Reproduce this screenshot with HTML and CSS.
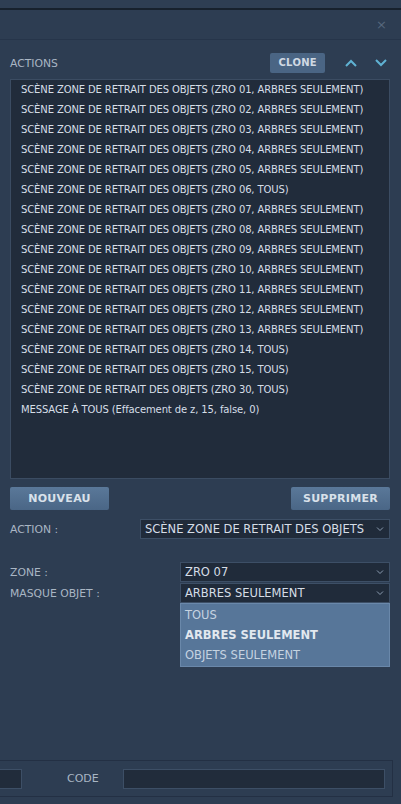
FILE: index.html
```html
<!DOCTYPE html>
<html>
<head>
<meta charset="utf-8">
<link rel="stylesheet" href="styles.css">
</head>
<body>
<div class="top-strip"></div>
<div class="header">
  <span class="close">×</span>
</div>
<div class="content">
  <div class="actions-row">
    <span class="label">ACTIONS</span>
    <div class="actions-tools">
      <span class="clone">CLONE</span>
      <svg class="arrow up" width="14" height="10" viewBox="0 0 14 10"><path d="M2 8 L7 3 L12 8" fill="none" stroke="#5fb2d3" stroke-width="2"/></svg>
      <svg class="arrow down" width="14" height="10" viewBox="0 0 14 10"><path d="M2 2 L7 7 L12 2" fill="none" stroke="#5fb2d3" stroke-width="2"/></svg>
    </div>
  </div>
  <div class="list">
    <div class="item">SCÈNE ZONE DE RETRAIT DES OBJETS (ZRO 01, ARBRES SEULEMENT)</div>
    <div class="item">SCÈNE ZONE DE RETRAIT DES OBJETS (ZRO 02, ARBRES SEULEMENT)</div>
    <div class="item">SCÈNE ZONE DE RETRAIT DES OBJETS (ZRO 03, ARBRES SEULEMENT)</div>
    <div class="item">SCÈNE ZONE DE RETRAIT DES OBJETS (ZRO 04, ARBRES SEULEMENT)</div>
    <div class="item">SCÈNE ZONE DE RETRAIT DES OBJETS (ZRO 05, ARBRES SEULEMENT)</div>
    <div class="item">SCÈNE ZONE DE RETRAIT DES OBJETS (ZRO 06, TOUS)</div>
    <div class="item">SCÈNE ZONE DE RETRAIT DES OBJETS (ZRO 07, ARBRES SEULEMENT)</div>
    <div class="item">SCÈNE ZONE DE RETRAIT DES OBJETS (ZRO 08, ARBRES SEULEMENT)</div>
    <div class="item">SCÈNE ZONE DE RETRAIT DES OBJETS (ZRO 09, ARBRES SEULEMENT)</div>
    <div class="item">SCÈNE ZONE DE RETRAIT DES OBJETS (ZRO 10, ARBRES SEULEMENT)</div>
    <div class="item">SCÈNE ZONE DE RETRAIT DES OBJETS (ZRO 11, ARBRES SEULEMENT)</div>
    <div class="item">SCÈNE ZONE DE RETRAIT DES OBJETS (ZRO 12, ARBRES SEULEMENT)</div>
    <div class="item">SCÈNE ZONE DE RETRAIT DES OBJETS (ZRO 13, ARBRES SEULEMENT)</div>
    <div class="item">SCÈNE ZONE DE RETRAIT DES OBJETS (ZRO 14, TOUS)</div>
    <div class="item">SCÈNE ZONE DE RETRAIT DES OBJETS (ZRO 15, TOUS)</div>
    <div class="item">SCÈNE ZONE DE RETRAIT DES OBJETS (ZRO 30, TOUS)</div>
    <div class="item">MESSAGE À TOUS (Effacement de z, 15, false, 0)</div>
  </div>
  <div class="buttons">
    <span class="btn">NOUVEAU</span>
    <span class="btn">SUPPRIMER</span>
  </div>
  <div class="field action-field">
    <span class="label">ACTION :</span>
    <div class="select wide">
      <span>SCÈNE ZONE DE RETRAIT DES OBJETS</span>
      <svg class="chev" width="8" height="6" viewBox="0 0 8 6"><path d="M1 1.5 L4 4.5 L7 1.5" fill="none" stroke="#8a9bb0" stroke-width="1"/></svg>
    </div>
  </div>
  <div class="params">
    <div class="field">
      <span class="label">ZONE :</span>
      <div class="select narrow">
        <span>ZRO 07</span>
        <svg class="chev" width="8" height="6" viewBox="0 0 8 6"><path d="M1 1.5 L4 4.5 L7 1.5" fill="none" stroke="#8a9bb0" stroke-width="1"/></svg>
      </div>
    </div>
    <div class="field">
      <span class="label">MASQUE OBJET :</span>
      <div class="select narrow open">
        <span>ARBRES SEULEMENT</span>
        <svg class="chev" width="8" height="6" viewBox="0 0 8 6"><path d="M1 1.5 L4 4.5 L7 1.5" fill="none" stroke="#8a9bb0" stroke-width="1"/></svg>
        <div class="dropdown">
          <div class="opt">TOUS</div>
          <div class="opt sel">ARBRES SEULEMENT</div>
          <div class="opt">OBJETS SEULEMENT</div>
        </div>
      </div>
    </div>
  </div>
</div>
<div class="footer">
  <div class="input left-input"></div>
  <span class="code-label">CODE</span>
  <div class="input code-input"></div>
</div>
</body>
</html>
```
FILE: styles.css
```css
html, body {
  margin: 0;
  padding: 0;
}
body {
  width: 401px;
  height: 804px;
  overflow: hidden;
  background: #2d3d52;
  font-family: "DejaVu Sans", sans-serif;
  color: #c5d0dc;
  display: flex;
  flex-direction: column;
}
.top-strip {
  height: 8px;
  background: #2e3e53;
  border-bottom: 2px solid #17212d;
}
.header {
  height: 29px;
  border-bottom: 1px solid #26354a;
  display: flex;
  justify-content: flex-end;
  align-items: center;
  padding-right: 14px;
}
.close {
  color: #56677c;
  font-size: 13px;
  line-height: 1;
}
.content {
  padding: 13px 11px 0 10px;
  display: flex;
  flex-direction: column;
}
.label {
  font-size: 10.8px;
  color: #a9b6c4;
}
.actions-row {
  height: 20px;
  display: flex;
  align-items: center;
  justify-content: space-between;
}
.actions-tools {
  display: flex;
  align-items: center;
}
.clone {
  background: #4a6584;
  color: #d0d9e3;
  font-weight: bold;
  font-size: 10px;
  height: 20px;
  line-height: 20px;
  padding: 0 8px;
  border-radius: 2px;
  letter-spacing: 0.3px;
}
.arrow.up {
  margin-left: 19px;
}
.arrow.down {
  margin-left: 16px;
  margin-right: 2px;
}
.list {
  margin-top: 6px;
  height: 400px;
  background: #212c3b;
  border: 1px solid #3b4c62;
  padding: 0 0 0 10px;
  box-sizing: border-box;
}
.item {
  height: 20px;
  line-height: 20px;
  font-size: 10px;
  letter-spacing: -0.12px;
  color: #d6dee7;
  white-space: nowrap;
}
.buttons {
  margin-top: 8px;
  display: flex;
  justify-content: space-between;
  height: 23px;
}
.btn {
  width: 99px;
  height: 23px;
  line-height: 23px;
  text-align: center;
  font-weight: bold;
  font-size: 11px;
  color: #d9e1ea;
  background: linear-gradient(#5a7899, #4a6686);
  border-radius: 2px;
  letter-spacing: 0.3px;
}
.field {
  display: flex;
  align-items: center;
  justify-content: space-between;
  height: 20px;
}
.action-field {
  margin-top: 9px;
}
.params {
  margin-top: 23px;
  display: flex;
  flex-direction: column;
  gap: 1px;
}
.select {
  position: relative;
  height: 20px;
  box-sizing: border-box;
  background: #202b3a;
  border: 1px solid #3d4f66;
  display: flex;
  align-items: center;
  justify-content: space-between;
  padding: 0 5px 0 4px;
  font-size: 11.5px;
  color: #d6dee7;
  white-space: nowrap;
}
.select.wide { width: 250px; }
.select.narrow { width: 210px; }
.chev { flex: none; }
.dropdown {
  position: absolute;
  left: -1px;
  top: 19px;
  width: 210px;
  box-sizing: border-box;
  background: #577699;
  border: 1px solid #6a88aa;
  padding: 1px 0 1px;
  z-index: 2;
}
.opt {
  height: 20px;
  line-height: 20px;
  padding-left: 4px;
  font-size: 11.5px;
  color: #c5d3e1;
}
.opt.sel {
  font-weight: bold;
  color: #e2e8ef;
}
.footer {
  margin-top: auto;
  margin-bottom: 7px;
  height: 37px;
  box-sizing: border-box;
  border-top: 1px solid #233044;
  border-bottom: 1px solid #233044;
  border-right: 1px solid #233044;
  width: 393px;
  display: flex;
  align-items: center;
}
.input {
  height: 20px;
  box-sizing: border-box;
  background: #212c3b;
  border: 1px solid #3d4f66;
}
.left-input {
  width: 22px;
  border-left: none;
}
.code-label {
  margin-left: 45px;
  font-size: 11px;
  color: #a9b6c4;
  width: 56px;
}
.code-input {
  width: 262px;
}
```
